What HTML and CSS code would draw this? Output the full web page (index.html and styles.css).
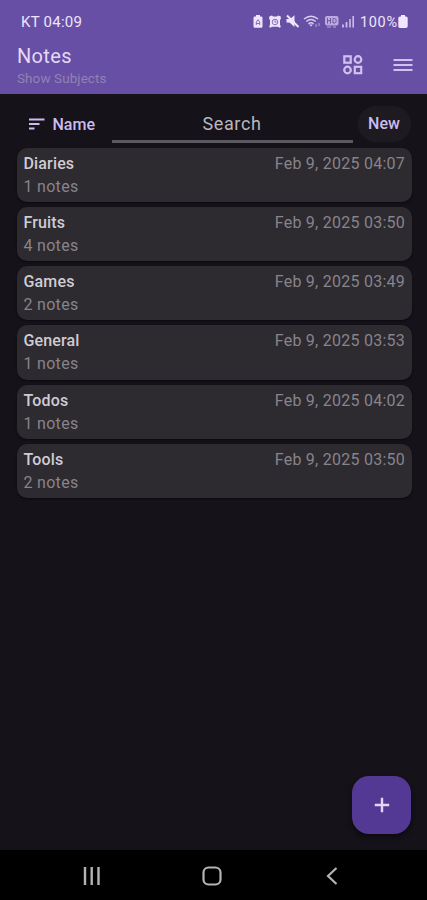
FILE: index.html
```html
<!DOCTYPE html>
<html lang="en">
<head>
<meta charset="utf-8">
<title>Notes</title>
<link rel="stylesheet" href="styles.css">
</head>
<body>
<header class="top">
  <div class="status">
    <span class="clock">KT 04:09</span>
    <div class="indicators">
      <svg width="156" height="18" viewBox="252 13 156 18">
        <g fill="#eee4fc">
          <path d="M256 15h4v1.500h1.200q1.300 0 1.300 1.300v8.700q0 1.300-1.300 1.300h-6.400q-1.300 0-1.300-1.300v-8.700q0-1.300 1.300-1.300h1.200z"/>
          <path d="M269.500 16.200l2.500-.7 1 1h4l1-1 2.500.7.500 2.300-1 1.500v4.500l.8 2.500-1.300.8-1.500-1h-6l-1.500 1-1.300-.8.800-2.500v-4.500l-1-1.500z"/>
          <path d="M286.500 19h3.500l4.500-3.800v7.500l-8-.2z"/>
          <path d="M289 22l5.500 5v-6z"/>
        </g>
        <g fill="none" stroke="#8670b8" stroke-width="1">
          <path d="M256.300 25v-3l1.700-2.300 1.700 2.300v3M256 23.500h4"/>
          <circle cx="275" cy="22" r="2.800"/>
          <path d="M275 20.200v2h1.500"/>
        </g>
        <path d="M287 15.500l11.500 11.500" stroke="#eee4fc" stroke-width="2"/>
        <g fill="none" stroke="#dacdf0" stroke-width="1.500">
          <path d="M304 19q7-5.500 14 0M306.300 21.500q4.700-3.800 9.400 0M308.500 23.800q2.500-2 5 0"/>
        </g>
        <path d="M309.300 24.500h3.400l-1.700 2.200z" fill="#dacdf0"/>
        <path d="M316 24v3M319 23v3" stroke="#aa96d0" stroke-width="1.200"/>
        <rect x="325" y="16" width="13.500" height="9.500" rx="2" fill="#bcaadc"/>
        <path d="M327.500 18v5.500M330.500 18v5.500M327.500 20.700h3M333 18.500v4.500h1.500q1.700 0 1.700-2.200t-1.700-2.300z" fill="none" stroke="#674fa5" stroke-width=".9"/>
        <path d="M327 27h4M333 27h3" stroke="#bcaadc"/>
        <path d="M343 24.500v3M346.500 22v5.500" stroke="#cabbe7" stroke-width="1.800"/>
        <path d="M350 19v8.500M353.200 16v11.500" stroke="#cabbe7" stroke-width="1.600"/>
        <text x="360" y="27" class="percent" textLength="37">100%</text>
        <path d="M401 15h4v1.500h1q1.700 0 1.700 1.700v8q0 1.800-1.700 1.800h-6q-1.700 0-1.700-1.800v-8q0-1.700 1.700-1.700h1z" fill="#f0e6ff"/>
      </svg>
    </div>
  </div>
  <div class="appbar">
    <div class="titles">
      <h1>Notes</h1>
      <p>Show Subjects</p>
    </div>
    <div class="actions">
      <svg width="20" height="20" viewBox="0 0 20 20" fill="none" stroke="#d3c0ee" stroke-width="2.200">
        <rect x="1.300" y="1.300" width="6.400" height="6.400"/>
        <circle cx="15" cy="4.500" r="3.300"/>
        <circle cx="4.500" cy="15" r="3.300"/>
        <rect x="11.800" y="11.800" width="6.400" height="6.400"/>
      </svg>
      <svg width="20" height="14" viewBox="0 0 20 14" stroke="#d3c0ee" stroke-width="2.200">
        <path d="M.5 2h19M.5 7h19M.5 12h19"/>
      </svg>
    </div>
  </div>
</header>
<main>
  <div class="tools">
    <div class="sort">
      <svg width="16" height="12" viewBox="0 0 16 12" stroke="#cbbcf0" stroke-width="1.800">
        <path d="M0 1.500h15.500M0 6h10.500M0 10.500h5.500"/>
      </svg>
      <span>Name</span>
    </div>
    <div class="search"><span>Search</span></div>
    <div class="new"><span>New</span></div>
  </div>
  <div class="list">
    <div class="card"><div class="row"><b>Diaries</b><time>Feb 9, 2025 04:07</time></div><p>1 notes</p></div>
    <div class="card"><div class="row"><b>Fruits</b><time>Feb 9, 2025 03:50</time></div><p>4 notes</p></div>
    <div class="card"><div class="row"><b>Games</b><time>Feb 9, 2025 03:49</time></div><p>2 notes</p></div>
    <div class="card"><div class="row"><b>General</b><time>Feb 9, 2025 03:53</time></div><p>1 notes</p></div>
    <div class="card"><div class="row"><b>Todos</b><time>Feb 9, 2025 04:02</time></div><p>1 notes</p></div>
    <div class="card"><div class="row"><b>Tools</b><time>Feb 9, 2025 03:50</time></div><p>2 notes</p></div>
  </div>
  <div class="fab">
    <svg width="16" height="16" viewBox="0 0 16 16" stroke="#e4d3fc" stroke-width="2.400"><path d="M8 .8v14.400M.8 8h14.400"/></svg>
  </div>
</main>
<nav>
  <svg width="18" height="18" viewBox="0 0 18 18" stroke="#b4b4b4" stroke-width="2.400"><path d="M2 0v18M8.700 0v18M15.500 0v18"/></svg>
  <svg width="20" height="20" viewBox="0 0 20 20" fill="none" stroke="#b4b4b4" stroke-width="2.200"><rect x="1.500" y="1.500" width="17" height="17" rx="5"/></svg>
  <svg width="12" height="18" viewBox="0 0 12 18" fill="none" stroke="#b4b4b4" stroke-width="2.200"><path d="M10.500 1L2 9l8.500 8"/></svg>
</nav>
</body>
</html>
```
FILE: styles.css
```css
* { box-sizing: border-box; }
body {
  margin: 0;
  width: 427px;
  height: 900px;
  display: flex;
  flex-direction: column;
  overflow: hidden;
  background: #151219;
  font-family: Roboto, sans-serif;
}
h1, p { margin: 0; }
svg { display: block; }
.top {
  height: 94px;
  background: #674fa5;
  flex: none;
}
.status {
  height: 43px;
  padding: 13px 19px 0 21px;
  display: flex;
  justify-content: space-between;
}
.clock {
  font-size: 15px;
  line-height: 18px;
  letter-spacing: 0.25px;
  color: #eee4fb;
}
.percent {
  font-size: 14.5px;
  fill: #eee4fc;
}
.appbar {
  display: flex;
  justify-content: space-between;
  padding: 0 14px 0 17px;
}
.titles h1 {
  font-size: 20px;
  line-height: 26px;
  font-weight: 400;
  letter-spacing: 0.35px;
  color: #e4d8f5;
}
.titles p {
  font-size: 13.5px;
  line-height: 18px;
  letter-spacing: 0.08px;
  color: #9182b2;
}
.actions {
  display: flex;
  align-items: center;
  gap: 30px;
  height: 44px;
}
main {
  flex: 1;
  position: relative;
  padding: 12px 15.500px 0 16.500px;
}
.tools {
  display: flex;
  height: 36px;
}
.sort {
  width: 95px;
  padding: 0 0 0 12px;
  display: flex;
  align-items: center;
  gap: 8px;
  color: #cbbcf0;
  font-size: 16px;
  font-weight: 500;
}
.search {
  width: 241px;
  height: 37px;
  border-bottom: 3px solid #5b585f;
  text-align: center;
  font-size: 18px;
  line-height: 36px;
  letter-spacing: 0.6px;
  color: #bbb7be;
}
.new {
  width: 53px;
  height: 36px;
  margin-left: 5px;
  border-radius: 18px;
  background: #1d1b20;
  color: #cbbcf0;
  font-size: 16px;
  font-weight: 500;
  line-height: 36px;
  text-align: center;
}
.list {
  display: flex;
  flex-direction: column;
  gap: 5px;
  padding-top: 6px;
}
.card {
  height: 54.150px;
  padding: 5px 6.500px 0 7px;
  border-radius: 10px;
  background: #2d2a30;
  box-shadow: 0 1px 2px #0c0a0f;
}
.row {
  display: flex;
  justify-content: space-between;
  font-size: 16px;
  line-height: 21px;
}
.row b {
  font-weight: 500;
  letter-spacing: 0.15px;
  color: #d0ccd3;
}
.row time {
  color: #87848b;
  letter-spacing: 0.25px;
}
.card p {
  font-size: 16px;
  line-height: 25px;
  letter-spacing: 0.3px;
  color: #87848b;
}
.fab {
  position: absolute;
  right: 16px;
  bottom: 16px;
  width: 59px;
  height: 58px;
  border-radius: 17px;
  background: #533993;
  box-shadow: 0 3px 5px #0c0a0f;
  display: flex;
  align-items: center;
  justify-content: center;
}
nav {
  flex: none;
  height: 50px;
  background: #000;
  display: grid;
  grid-template-columns: 120px 120px 120px;
  justify-content: center;
  justify-items: center;
  align-items: center;
  padding: 2px 3px 0 0;
}
```
